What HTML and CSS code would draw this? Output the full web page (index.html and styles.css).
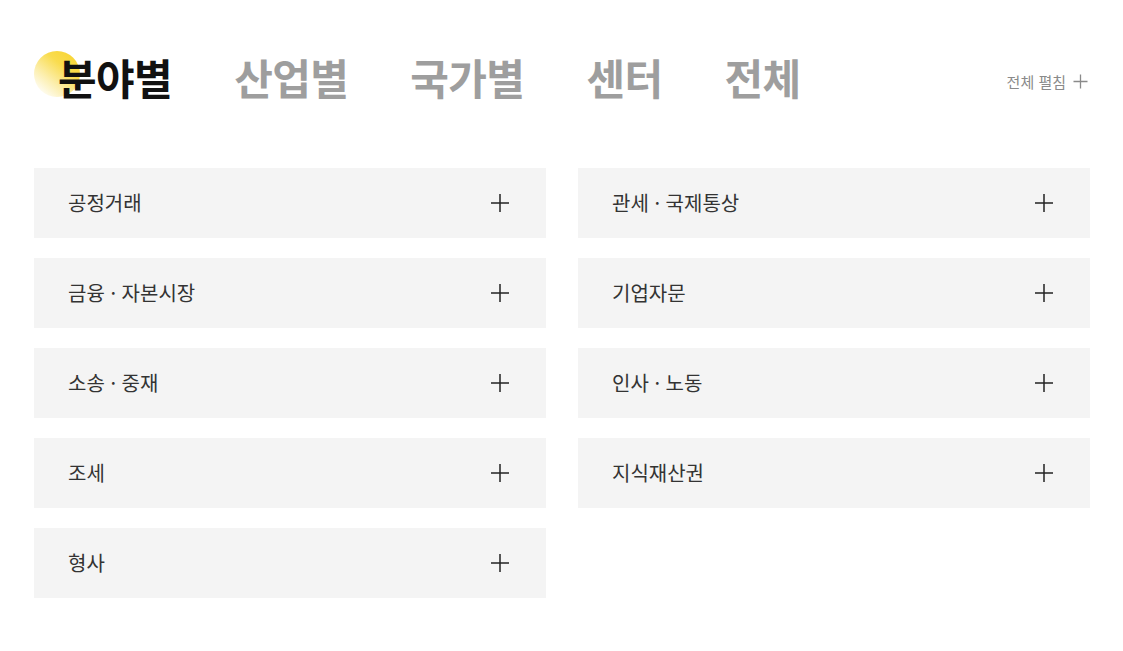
FILE: index.html
```html
<!DOCTYPE html>
<html lang="ko">
<head>
<meta charset="utf-8">
<link rel="stylesheet" href="styles.css">
</head>
<body>
<div class="page">
  <div class="head">
    <nav class="tabs">
      <a class="tab active">분야별</a>
      <a class="tab">산업별</a>
      <a class="tab">국가별</a>
      <a class="tab">센터</a>
      <a class="tab">전체</a>
    </nav>
    <button class="expand">전체 펼침
      <svg class="expand-icon" viewBox="0 0 15 15" width="15" height="15"><path d="M7.5 0.5V14.5M0.5 7.5H14.5" stroke="#8a8a8a" stroke-width="1.3" fill="none"/></svg>
    </button>
  </div>
  <div class="grid">
    <div class="item"><span>공정거래</span><svg class="plus" viewBox="0 0 18 18" width="18" height="18"><path d="M9 0V18M0 9H18" stroke="#222" stroke-width="1.5" fill="none"/></svg></div>
    <div class="item"><span>관세 · 국제통상</span><svg class="plus" viewBox="0 0 18 18" width="18" height="18"><path d="M9 0V18M0 9H18" stroke="#222" stroke-width="1.5" fill="none"/></svg></div>
    <div class="item"><span>금융 · 자본시장</span><svg class="plus" viewBox="0 0 18 18" width="18" height="18"><path d="M9 0V18M0 9H18" stroke="#222" stroke-width="1.5" fill="none"/></svg></div>
    <div class="item"><span>기업자문</span><svg class="plus" viewBox="0 0 18 18" width="18" height="18"><path d="M9 0V18M0 9H18" stroke="#222" stroke-width="1.5" fill="none"/></svg></div>
    <div class="item"><span>소송 · 중재</span><svg class="plus" viewBox="0 0 18 18" width="18" height="18"><path d="M9 0V18M0 9H18" stroke="#222" stroke-width="1.5" fill="none"/></svg></div>
    <div class="item"><span>인사 · 노동</span><svg class="plus" viewBox="0 0 18 18" width="18" height="18"><path d="M9 0V18M0 9H18" stroke="#222" stroke-width="1.5" fill="none"/></svg></div>
    <div class="item"><span>조세</span><svg class="plus" viewBox="0 0 18 18" width="18" height="18"><path d="M9 0V18M0 9H18" stroke="#222" stroke-width="1.5" fill="none"/></svg></div>
    <div class="item"><span>지식재산권</span><svg class="plus" viewBox="0 0 18 18" width="18" height="18"><path d="M9 0V18M0 9H18" stroke="#222" stroke-width="1.5" fill="none"/></svg></div>
    <div class="item"><span>형사</span><svg class="plus" viewBox="0 0 18 18" width="18" height="18"><path d="M9 0V18M0 9H18" stroke="#222" stroke-width="1.5" fill="none"/></svg></div>
  </div>
</div>
</body>
</html>
```

FILE: styles.css
```css
* { box-sizing: border-box; }
html, body { margin: 0; padding: 0; }
html { background: #fff; }
body {
  font-family: "Noto Sans CJK KR", "Noto Sans", sans-serif;
  color: #222;
}
.page {
  width: 1123px;
  padding: 46px 33px 0 34px;
}
.head {
  display: flex;
  align-items: center;
  justify-content: space-between;
  height: 62px;
}
.tabs {
  display: flex;
  gap: 62px;
  padding-left: 24px;
  isolation: isolate;
}
.tab {
  position: relative;
  font-size: 42px;
  font-weight: 700;
  letter-spacing: -0.6px;
  line-height: 62px;
  color: #9e9e9e;
  cursor: pointer;
}
.tab.active { color: #111; }
.tab.active::before {
  content: "";
  position: absolute;
  left: -24px;
  top: 5px;
  width: 46px;
  height: 46px;
  border-radius: 50%;
  background: linear-gradient(220deg, #f8d22a 0%, #f9dc4e 35%, #fcefb0 65%, rgba(255,255,255,0) 92%);
  z-index: -1;
}
.expand {
  display: flex;
  align-items: center;
  gap: 7px;
  border: 0;
  background: none;
  padding: 0 2px 0 0;
  font-family: inherit;
  font-size: 15px;
  color: #8a8a8a;
  margin-top: 8px;
}
.grid {
  display: grid;
  grid-template-columns: 512px 512px;
  column-gap: 32px;
  row-gap: 20px;
  margin-top: 60px;
}
.item {
  height: 70px;
  background: #f4f4f4;
  display: flex;
  align-items: center;
  justify-content: space-between;
  padding: 0 37px 0 34px;
  font-size: 20px;
  color: #333;
}
.item span { margin-top: -2px; }
.plus { flex: none; }
```
